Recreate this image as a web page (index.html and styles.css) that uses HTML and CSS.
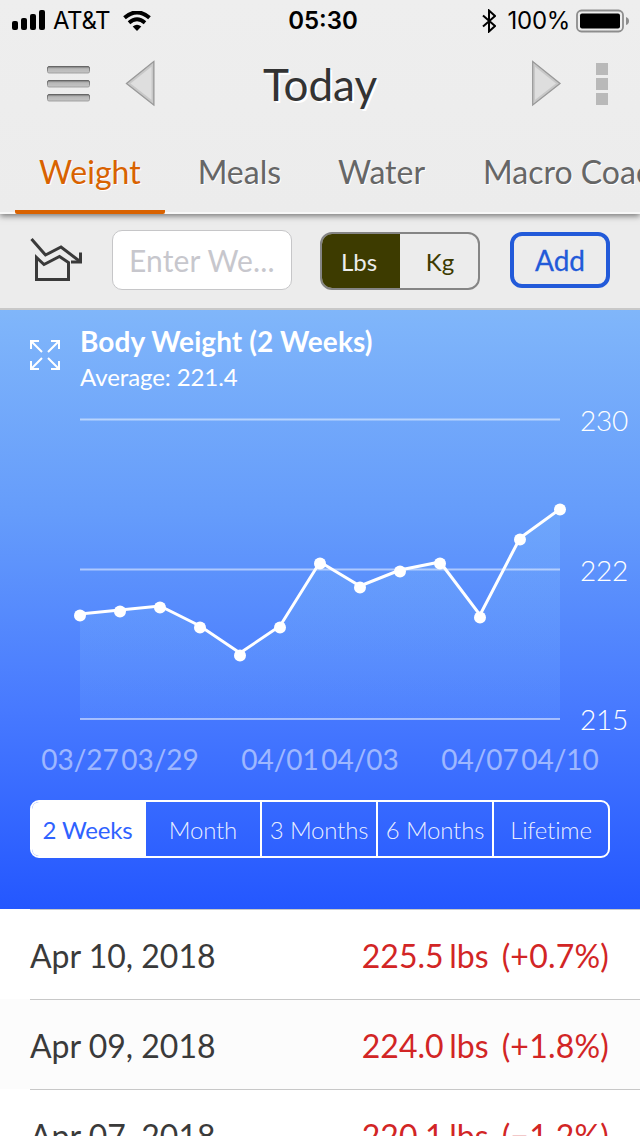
FILE: index.html
```html
<!DOCTYPE html>
<html lang="en">
<head>
  <meta charset="UTF-8" />
  <meta name="viewport" content="width=device-width, initial-scale=1" />
  <title>Weight - Today</title>
  <link rel="stylesheet" href="styles.css">
</head>
<body>
  <header class="header">
    <div class="status-bar">
      <div class="status-left">
        <svg width="34" height="21" viewBox="0 0 34 21">
          <rect x="0" y="11" width="6" height="9" rx="2" />
          <rect x="9" y="8" width="6" height="12" rx="2" />
          <rect x="18" y="4" width="6" height="16" rx="2" />
          <rect x="27" y="0" width="6" height="20" rx="2" />
        </svg>
        <span class="carrier">AT&amp;T</span>
        <svg class="wifi" width="28" height="20" viewBox="0 0 28 20">
          <path d="M1.500 6.800Q14 -4 26.500 6.800" fill="none" stroke="#000" stroke-width="4" />
          <path d="M6 11.700Q14 4.800 22 11.700" fill="none" stroke="#000" stroke-width="3.800" />
          <path d="M9.700 15.500Q14 12 18.300 15.500L14 20Z" />
        </svg>
      </div>
      <span class="clock">05:30</span>
      <div class="status-right">
        <svg width="14" height="24" viewBox="0 0 14 24">
          <path d="M1 6.500L13 17L7 22.500V1.500L13 7L1 17.500" fill="none" stroke="#000" stroke-width="2" />
        </svg>
        <span class="percent">100%</span>
        <svg width="54" height="24" viewBox="0 0 54 24">
          <rect x="1" y="1.500" width="46" height="21" rx="4.500" fill="none" stroke="#8d8d8d" stroke-width="1.800" />
          <rect x="4" y="4.500" width="40" height="15" rx="2" />
          <path d="M50 8Q53 9 53 12Q53 15 50 16Z" fill="#8d8d8d" />
        </svg>
      </div>
    </div>
    <div class="nav">
      <svg class="menu" width="44" height="38" viewBox="0 0 44 38">
        <defs>
          <linearGradient id="bar" x1="0" y1="0" x2="0" y2="1">
            <stop offset="0" stop-color="#707070" />
            <stop offset="0.350" stop-color="#b8b8b8" />
            <stop offset="1" stop-color="#c4c4c4" />
          </linearGradient>
          <linearGradient id="edge" x1="0" y1="0" x2="0" y2="1">
            <stop offset="0" stop-color="#666" />
            <stop offset="1" stop-color="#a4a4a4" />
          </linearGradient>
        </defs>
        <g fill="url(#bar)" stroke="url(#edge)" stroke-width="1">
          <rect x="0.500" y="1.500" width="42" height="6.500" rx="1.500" />
          <rect x="0.500" y="15.500" width="42" height="6.500" rx="1.500" />
          <rect x="0.500" y="29.500" width="42" height="6.500" rx="1.500" />
        </g>
      </svg>
      <svg class="prev" width="30" height="48" viewBox="0 0 30 48">
        <path d="M3 23.500L28 3.500V43Z" fill="#dedede" stroke="#c8c8c8" stroke-width="3" />
        <path d="M1.500 23.500L28.800 1.500V45Z" fill="none" stroke="#999" stroke-width="1.200" />
      </svg>
      <h1>Today</h1>
      <svg class="next" width="30" height="48" viewBox="0 0 30 48">
        <path d="M27.500 23.500L2.500 3.500V43Z" fill="#dedede" stroke="#c8c8c8" stroke-width="3" />
        <path d="M29 23.500L1.700 1.500V45Z" fill="none" stroke="#999" stroke-width="1.200" />
      </svg>
      <div class="more"><i></i><i></i><i></i></div>
    </div>
    <nav class="tabs">
      <a class="tab active">Weight</a>
      <a class="tab">Meals</a>
      <a class="tab">Water</a>
      <a class="tab">Macro Coach</a>
    </nav>
  </header>

  <form class="entry">
    <svg class="trend" width="54" height="46" viewBox="0 0 54 46">
      <g fill="none" stroke="#3a3a3a" stroke-width="3">
        <path d="M1.500 2L15.500 18L31 10L50 24.500" />
        <path d="M41 25H50.500V15.500" />
        <path d="M6.500 20.500V42.500H38.500V25.500L29.500 19.500L14 27.500Z" />
      </g>
    </svg>
    <input class="weight" type="text" placeholder="Enter We..." />
    <div class="units">
      <span class="unit on">Lbs</span>
      <span class="unit">Kg</span>
    </div>
    <button class="add" type="button">Add</button>
  </form>

  <section class="chart">
    <div class="chart-head">
      <svg width="32" height="32" viewBox="0 0 32 32">
        <g fill="none" stroke="#fff" stroke-width="2">
          <path d="M1 9V1H9M1 1L12 12" />
          <path d="M21 1H29V9M29 1L18 12" />
          <path d="M1 21V29H9M1 29L12 18" />
          <path d="M21 29H29V21M29 29L18 18" />
        </g>
      </svg>
      <div>
        <h2>Body Weight (2 Weeks)</h2>
        <p>Average: 221.4</p>
      </div>
    </div>
    <svg class="plot" width="640" height="380" viewBox="0 400 640 380">
      <defs>
        <linearGradient id="area" gradientUnits="userSpaceOnUse" x1="0" y1="508" x2="0" y2="719">
          <stop offset="0" stop-color="#7db5fb" stop-opacity="0.400" />
          <stop offset="1" stop-color="#7db5fb" stop-opacity="0.150" />
        </linearGradient>
      </defs>
      <path d="M80 614L120 610L160 606L200 626L240 654L280 626L320 562L360 586L400 570L440 562L480 616L520 538L560 509V719H80Z" fill="url(#area)" />
      <path class="grid" d="M80 419.500H560M80 569.500H560M80 719H560" />
      <path class="line" d="M80 614L120 610L160 606L200 626L240 653L280 626L320 562L360 586L400 570L440 562L480 615L520 538L560 509" />
      <g fill="#fff">
        <circle cx="80" cy="615.500" r="6" />
        <circle cx="120" cy="611.500" r="6" />
        <circle cx="160" cy="607.500" r="6" />
        <circle cx="200" cy="627.500" r="6" />
        <circle cx="240" cy="655.500" r="6" />
        <circle cx="280" cy="627.500" r="6" />
        <circle cx="320" cy="563.500" r="6" />
        <circle cx="360" cy="587.500" r="6" />
        <circle cx="400" cy="571.500" r="6" />
        <circle cx="440" cy="563.500" r="6" />
        <circle cx="480" cy="617.500" r="6" />
        <circle cx="520" cy="539.500" r="6" />
        <circle cx="560" cy="509.500" r="6" />
      </g>
      <g class="y-axis">
        <text x="580" y="431">230</text>
        <text x="580" y="581">222</text>
        <text x="580" y="730">215</text>
      </g>
      <g class="x-axis">
        <text x="80" y="770">03/27</text>
        <text x="160" y="770">03/29</text>
        <text x="280" y="770">04/01</text>
        <text x="360" y="770">04/03</text>
        <text x="480" y="770">04/07</text>
        <text x="560" y="770">04/10</text>
      </g>
    </svg>
    <div class="ranges">
      <span class="range on">2 Weeks</span>
      <span class="range">Month</span>
      <span class="range">3 Months</span>
      <span class="range">6 Months</span>
      <span class="range">Lifetime</span>
    </div>
  </section>

  <ul class="log">
    <li><div class="row"><span class="date">Apr 10, 2018</span><span class="value">225.5 lbs</span><span class="change">(+0.7%)</span></div></li>
    <li><div class="row"><span class="date">Apr 09, 2018</span><span class="value">224.0 lbs</span><span class="change">(+1.8%)</span></div></li>
    <li><div class="row"><span class="date">Apr 07, 2018</span><span class="value">220.1 lbs</span><span class="change">(−1.2%)</span></div></li>
  </ul>
</body>
</html>
```
FILE: styles.css
```css
* {
  box-sizing: border-box;
}
body {
  margin: 0;
  height: 1136px;
  overflow: hidden;
  background: #fff;
  color: #3a3a3a;
  font-family: Lato, sans-serif;
}
h1, h2, p, ul {
  margin: 0;
  padding: 0;
}
svg {
  display: block;
  flex: none;
}
.header {
  position: relative;
  height: 214px;
  background: linear-gradient(#eee, #ececec);
  border-bottom: 2px solid #f8f8f8;
  box-shadow: 0 2px 6px rgba(0,0,0,0.5);
}
.status-bar {
  display: grid;
  grid-template-columns: 1fr auto 1fr;
  height: 41px;
  padding: 0 10px 0 12px;
  align-items: center;
  font-family: Inter, sans-serif;
  font-size: 24px;
  color: #000;
}
.status-left, .status-right {
  display: flex;
  align-items: center;
}
.status-right {
  justify-content: flex-end;
}
.carrier {
  margin-left: 7px;
  letter-spacing: -0.4px;
}
.wifi {
  margin-left: 13px;
}
.clock {
  padding-left: 4px;
  font-weight: 600;
}
.percent {
  margin: 0 6px 0 12px;
  letter-spacing: -0.3px;
}
.nav {
  display: flex;
  align-items: center;
  height: 86px;
  padding: 0 32px 0 47px;
}
.prev {
  margin-left: 34px;
}
h1 {
  flex: 1;
  text-align: center;
  font-size: 44px;
  font-weight: 400;
  line-height: 86px;
  padding-right: 46px;
  color: #333;
  text-shadow: 2px 2px 0 #fff;
}
.more {
  display: flex;
  flex-direction: column;
  gap: 3px;
  margin-left: 35px;
}
.more i {
  width: 12px;
  height: 12px;
  background: #b9b9b9;
}
.tabs {
  display: flex;
  gap: 9px;
  height: 87px;
  padding-left: 15px;
  overflow: hidden;
}
.tab {
  flex: none;
  height: 87px;
  padding: 0 24px;
  font-size: 32px;
  line-height: 90px;
  color: #666;
  text-shadow: 1px 1px 0 #fff;
}
.tab:last-child {
  padding-left: 25px;
}
.tab.active {
  color: #d96200;
  border-bottom: 4px solid #d96200;
  border-radius: 2px;
}
.entry {
  display: flex;
  align-items: center;
  height: 96px;
  padding: 0 30px;
  background: #ececec;
  border-bottom: 2px solid #c8c8c8;
}
.trend {
  margin-top: -2px;
}
.weight {
  width: 180px;
  height: 60px;
  margin-left: 28px;
  margin-top: -2px;
  padding: 0 16px;
  border: 1px solid #c6c6c8;
  border-radius: 10px;
  background: #fff;
  font-family: Lato, sans-serif;
  font-size: 30px;
  letter-spacing: 0.15px;
}
.weight::placeholder {
  color: #c7c7cd;
}
.units {
  display: flex;
  width: 160px;
  height: 58px;
  margin-left: 28px;
  border: 2px solid #858585;
  border-radius: 12px;
  overflow: hidden;
}
.unit {
  width: 78px;
  padding-left: 2px;
  text-align: center;
  font-size: 24px;
  line-height: 56px;
  color: #3d3b00;
}
.unit.on {
  padding: 0 4px 0 0;
  background: #3d3b00;
  color: #ececec;
}
.add {
  width: 100px;
  height: 56px;
  margin-left: auto;
  margin-top: -2px;
  padding: 0;
  border: 4px solid #225ad9;
  border-radius: 12px;
  background: none;
  color: #225ad9;
  font-family: Lato, sans-serif;
  font-size: 28px;
  -webkit-text-stroke: 0.3px #225ad9;
}
.chart {
  height: 599px;
  background: linear-gradient(#80b6fa, #659cfb 34%, #4779ff 67%, #2457ff);
  color: #fff;
}
.chart-head {
  display: flex;
  gap: 18px;
  height: 90px;
  padding: 13px 30px 0;
}
.chart-head svg {
  margin-top: 17px;
}
h2 {
  font-size: 28px;
  font-weight: 700;
  line-height: 36px;
  letter-spacing: 0.08px;
}
.chart-head p {
  font-size: 24px;
  line-height: 36px;
  letter-spacing: -0.1px;
}
.grid {
  stroke: rgba(255,255,255,0.5);
  stroke-width: 2;
}
.line {
  fill: none;
  stroke: #fff;
  stroke-width: 3;
}
.y-axis text {
  fill: #fff;
  font-size: 28px;
  font-weight: 300;
  letter-spacing: -0.3px;
}
.x-axis text {
  fill: rgba(255,255,255,0.5);
  font-size: 28px;
  text-anchor: middle;
}
.ranges {
  display: flex;
  height: 58px;
  margin: 20px 30px 0;
  border: 2px solid #fff;
  border-radius: 9px;
  overflow: hidden;
}
.range {
  width: 116px;
  text-align: center;
  font-size: 24px;
  font-weight: 300;
  font-variant-ligatures: none;
  letter-spacing: -0.2px;
  line-height: 56px;
  white-space: nowrap;
  color: rgba(255,255,255,0.9);
  border-right: 2px solid #fff;
}
.range.on {
  width: 114px;
  padding-right: 3px;
  border-right: none;
  background: #fff;
  color: #2f62ff;
  font-weight: 400;
}
.range:last-child {
  width: 114px;
  border-right: none;
}
.log {
  list-style: none;
}
.log li {
  height: 90px;
  padding-left: 30px;
}
.log li:nth-child(even) {
  background: #fcfcfc;
}
.row {
  display: flex;
  height: 90px;
  padding-right: 31px;
  border-top: 1px solid #c8c8c8;
  font-size: 32px;
  line-height: 92px;
}
.date {
  flex: 1;
}
.value, .change {
  color: #d22525;
}
.value {
  word-spacing: -2.5px;
}
.change {
  margin-left: 13px;
  letter-spacing: 0.2px;
}
```
